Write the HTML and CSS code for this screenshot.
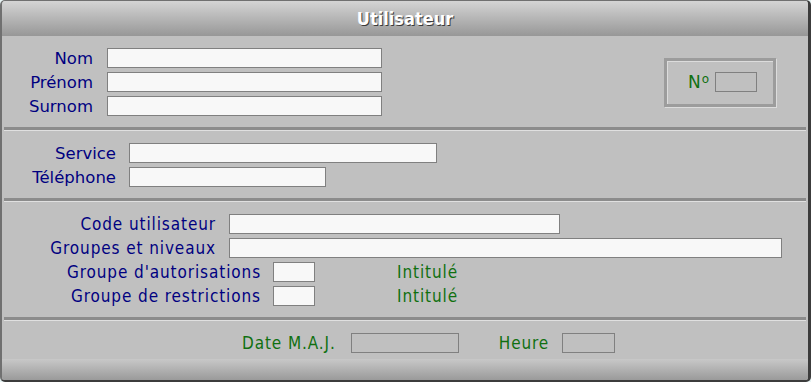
FILE: index.html
```html
<!DOCTYPE html>
<html lang="fr">
<head>
    <meta charset="UTF-8">
    <title>Utilisateur</title>
    <link rel="stylesheet" href="styles.css">
</head>
<body>
    <div class="window">
        <div class="titlebar">Utilisateur</div>

        <div class="section section-ident">
            <div class="rows">
                <div class="row"><label class="lbl w-ident">Nom</label><span class="field f-nom"></span></div>
                <div class="row"><label class="lbl w-ident">Prénom</label><span class="field f-nom"></span></div>
                <div class="row"><label class="lbl w-ident">Surnom</label><span class="field f-nom"></span></div>
            </div>
            <div class="numbox">
                <span class="num-lbl">N<span class="num-o">o</span></span><span class="field f-num"></span>
            </div>
        </div>
        <div class="sep"></div>

        <div class="section">
            <div class="rows">
                <div class="row"><label class="lbl w-service">Service</label><span class="field f-service"></span></div>
                <div class="row"><label class="lbl w-service">Téléphone</label><span class="field f-tel"></span></div>
            </div>
        </div>
        <div class="sep"></div>

        <div class="section">
            <div class="rows">
                <div class="row"><label class="lbl narrow w-code">Code utilisateur</label><span class="field f-code"></span></div>
                <div class="row"><label class="lbl narrow w-code">Groupes et niveaux</label><span class="field f-groupes"></span></div>
                <div class="row"><label class="lbl narrow w-groupe">Groupe d'autorisations</label><span class="field f-small"></span><span class="intitule">Intitulé</span></div>
                <div class="row"><label class="lbl narrow w-groupe">Groupe de restrictions</label><span class="field f-small"></span><span class="intitule">Intitulé</span></div>
            </div>
        </div>
        <div class="sep"></div>

        <div class="footer">
            <label class="lbl-green">Date M.A.J.</label><span class="field f-date"></span>
            <label class="lbl-green heure">Heure</label><span class="field f-heure"></span>
        </div>
        <div class="bottombar"></div>
    </div>
</body>
</html>
```

FILE: styles.css
```css
html, body {
    margin: 0;
    padding: 0;
}
body {
    background-color: #e6f2f2;
    width: 811px;
    height: 382px;
    overflow: hidden;
}
.window {
    box-sizing: border-box;
    width: 811px;
    height: 382px;
    background-color: #c0c0c0;
    border-top: 1px solid #707070;
    border-left: 2px solid #707070;
    border-right: 3px solid #3c3c3c;
    border-bottom: 2px solid #3c3c3c;
    border-radius: 5px;
    overflow: hidden;
    display: flex;
    flex-direction: column;
}
.titlebar {
    height: 35px;
    line-height: 36px;
    text-align: center;
    background: linear-gradient(#d4d4d4, #979797);
    color: #fff;
    font-family: "DejaVu Sans Condensed", "DejaVu Sans", sans-serif;
    font-weight: bold;
    font-size: 18px;
    text-shadow: 1px 1px 0 #3a3a3a;
}
.section {
    display: flex;
    align-items: center;
    padding: 12px 0 11px 0;
}
.rows {
    display: flex;
    flex-direction: column;
    gap: 4px;
}
.row {
    display: flex;
    align-items: center;
    height: 20px;
}
.lbl {
    font-family: "DejaVu Sans", Verdana, sans-serif;
    font-size: 16.5px;
    color: #000080;
    text-align: right;
    white-space: nowrap;
}
.lbl.narrow {
    font-family: "DejaVu Sans Condensed", sans-serif;
    font-size: 17px;
    letter-spacing: 0.9px;
}
.w-ident { width: 91px; margin-right: 14px; }
.w-service { width: 114px; margin-right: 13px; }
.w-code { width: 214px; margin-right: 13px; }
.w-groupe { width: 259px; margin-right: 12px; }

.field {
    box-sizing: border-box;
    display: inline-block;
    height: 20px;
    background-color: #f8f8f8;
    border: 1px solid #808080;
}
.f-nom { width: 275px; }
.f-service { width: 308px; }
.f-tel { width: 197px; }
.f-code { width: 331px; }
.f-groupes { width: 553px; }
.f-small { width: 42px; }
.f-num { width: 42px; background-color: #c0c0c0; }
.f-date { width: 108px; background-color: #c0c0c0; }
.f-heure { width: 53px; background-color: #c0c0c0; }

.intitule {
    margin-left: 82px;
    font-family: "DejaVu Sans Condensed", sans-serif;
    font-size: 17px;
    letter-spacing: 0.9px;
    color: #107010;
}
.numbox {
    box-sizing: border-box;
    margin-left: auto;
    margin-right: 32px;
    width: 112px;
    height: 49px;
    border: 3px solid #9c9c9c;
    box-shadow: 1px 1px 0 #dcdcdc, inset 1px 1px 0 #dcdcdc;
    display: flex;
    align-items: center;
    padding-left: 21px;
}
.num-lbl {
    font-family: "DejaVu Sans", sans-serif;
    font-size: 17px;
    color: #107010;
    margin-right: 6px;
}
.num-o {
    font-size: 12px;
    vertical-align: 5px;
    margin-left: 1px;
}
.sep {
    margin: 0 2px;
    height: 3px;
    background-color: #8c8c8c;
    border-bottom: 1px solid #e0e0e0;
}
.footer {
    display: flex;
    align-items: center;
    padding: 12px 0 6px 240px;
}
.lbl-green {
    font-family: "DejaVu Sans Condensed", sans-serif;
    font-size: 17px;
    letter-spacing: 0.9px;
    color: #107010;
    margin-right: 15px;
}
.heure {
    margin-left: 40px;
    margin-right: 13px;
}
.bottombar {
    flex: 1;
    background: linear-gradient(#c8c8c8, #9a9a9a);
}
```
